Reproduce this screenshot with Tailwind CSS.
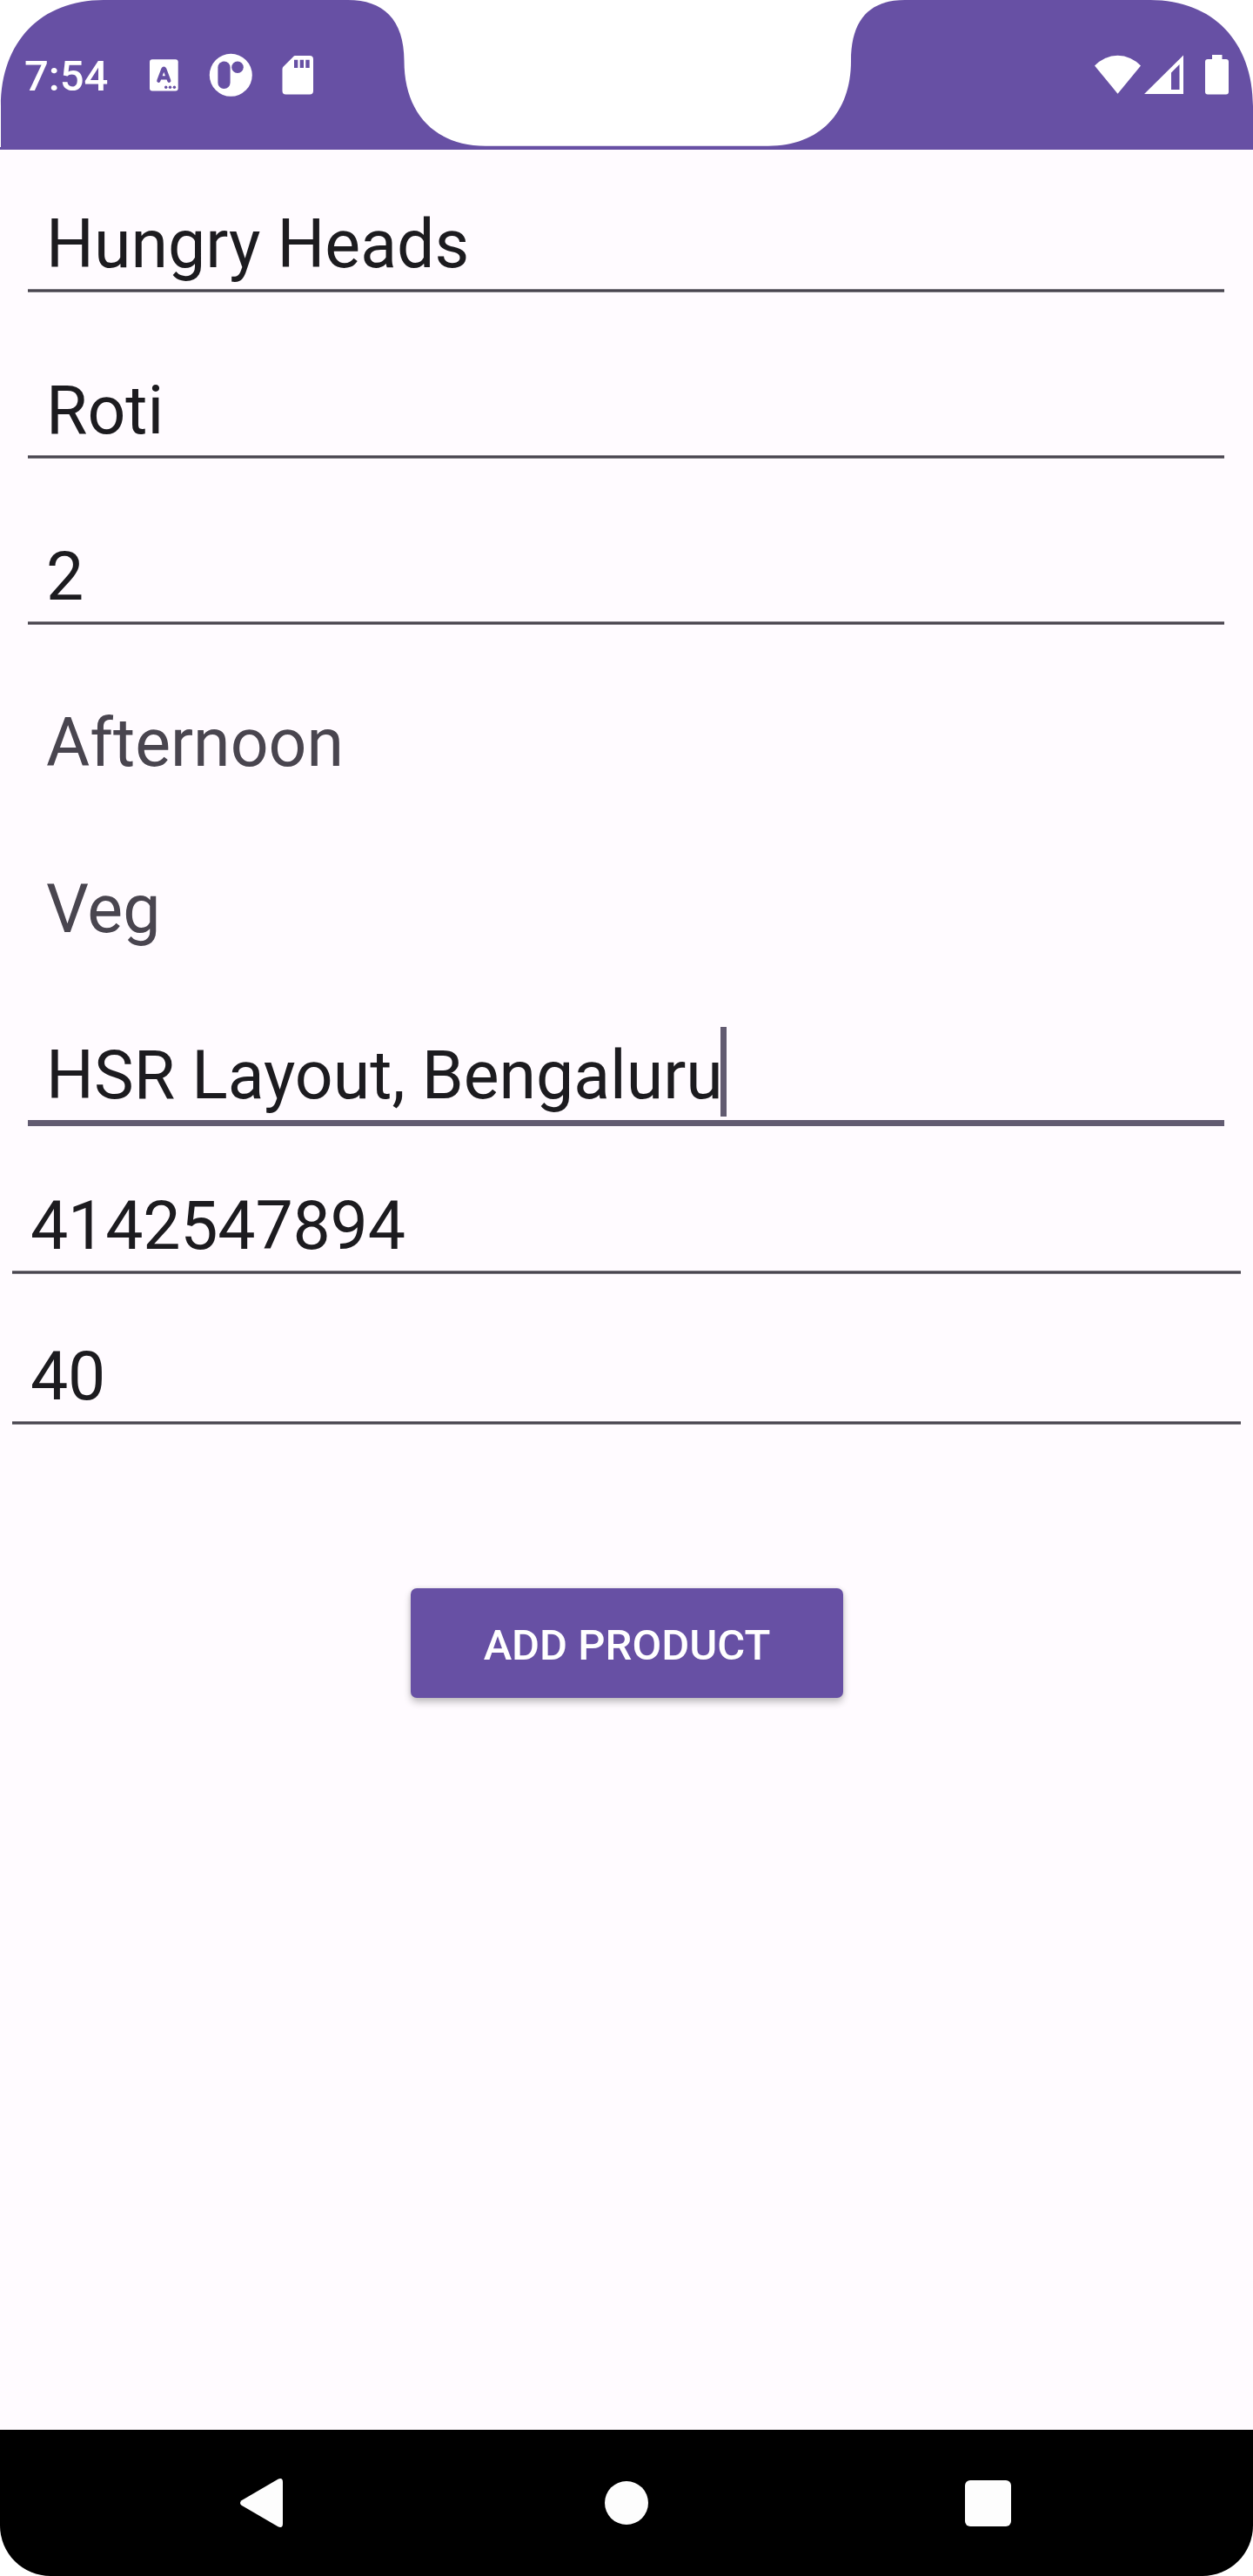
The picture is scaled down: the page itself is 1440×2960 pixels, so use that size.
<!DOCTYPE html>
<html lang="en">
<head>
<meta charset="utf-8">
<title>Add Product</title>
<script src="https://cdn.jsdelivr.net/npm/@tailwindcss/browser@4"></script>
</head>
<body class="bg-white">
<div class="flex h-[2960px] w-[1440px] flex-col overflow-hidden font-[Roboto,sans-serif]">

  <!-- Status bar with display cutout -->
  <header class="relative h-[172px] shrink-0">
    <svg class="absolute inset-0" width="1440" height="172" viewBox="0 0 1440 172">
      <path fill="#6750a4" d="M0 172V169H1V122C1 48 47 0 119 0H400C440 0 464.5 22 464.5 70C464.5 130 500 167.700 558 167.700H883C942 167.700 978 130 978 70C978 22 1000 0 1040 0H1322C1394 0 1440 48 1440 122V172Z"/>
    </svg>
    <div class="relative flex h-full items-start justify-between pt-[58px] pr-[28px] pl-[28px]">
      <div class="flex items-start">
        <span class="w-[144px] pt-px text-[49px] leading-[58px] font-medium text-white">7:54</span>
        <svg class="mt-[10px]" width="33" height="37" viewBox="172 68 33 37">
          <rect x="172" y="68.300" width="32.700" height="36.200" rx="3" fill="#fff"/>
          <path d="M182.300 92.800L187.300 79.500Q188.300 77.600 189.300 79.500L194.300 92.800M185 89.300H191.500" fill="none" stroke="#6750a4" stroke-width="4.200" stroke-linecap="round" stroke-linejoin="round"/>
          <g fill="#6750a4"><circle cx="190.700" cy="100.200" r="1.700"/><circle cx="195.500" cy="100.200" r="1.700"/><circle cx="200.400" cy="100.200" r="1.700"/></g>
        </svg>
        <svg class="mt-[3px] ml-[35px]" width="50" height="50" viewBox="240 61 50 50">
          <circle cx="265.300" cy="86.300" r="24.500" fill="#fff"/>
          <rect x="250.400" y="70.500" width="14.200" height="31.500" rx="7.100" fill="#6750a4"/>
          <circle cx="273" cy="77.300" r="6.800" fill="#6750a4"/>
        </svg>
        <svg class="mt-[5px] ml-[34px]" width="37" height="47" viewBox="324 63 37 47">
          <path fill="#fff" fill-rule="evenodd" d="M339 64H356Q360 64 360 68V104.500Q360 108.500 356 108.500H328.500Q324.500 108.500 324.500 104.500V79.500Q324.500 77.800 325.700 76.600L337 65.200Q338 64 339 64ZM338 68.700V78H342.300V68.700ZM344.700 68.700V78H349V68.700ZM351.300 68.700V78H355.700V68.700Z"/>
        </svg>
      </div>
      <div class="flex items-start pt-[4px]">
        <svg width="54" height="47" viewBox="1258 62 54 47"><path fill="#fff" d="M1258 75.500A36 36 0 0 1 1311 75.500L1284.500 107.700Z"/></svg>
        <svg class="ml-[2px]" width="47" height="47" viewBox="1314 62 47 47"><path fill="#fff" fill-rule="evenodd" d="M1315 108H1360V63.500ZM1346 83.500L1355.500 74V103H1346Z"/></svg>
        <svg class="ml-[24px]" width="27" height="47" viewBox="1385 62 27 47"><path fill="#fff" d="M1393 63H1404.500V68H1409Q1412 68 1412 71V105.500Q1412 108.500 1409 108.500H1388Q1385 108.500 1385 105.500V71Q1385 68 1388 68H1393Z"/></svg>
      </div>
    </div>
  </header>

  <!-- Product form -->
  <main class="flex grow flex-col bg-[#fffbff] pt-[9px] text-[77px] leading-[90px] text-[#1c1b1f]">
    <div class="flex flex-col gap-[18px] px-[32px]">
      <div class="flex h-[173px] flex-col pt-[55px]">
        <div class="h-[96px] pl-[21px]">Hungry Heads</div>
        <div class="h-1 w-[1375px] border-y border-[#7f7c83] bg-[#49454f]"></div>
      </div>
      <div class="flex h-[173px] flex-col pt-[55px]">
        <div class="h-[96px] pl-[21px]">Roti</div>
        <div class="h-1 w-[1375px] border-y border-[#7f7c83] bg-[#49454f]"></div>
      </div>
      <div class="flex h-[173px] flex-col pt-[55px]">
        <div class="h-[96px] pl-[21px]">2</div>
        <div class="h-1 w-[1375px] border-y border-[#7f7c83] bg-[#49454f]"></div>
      </div>
      <div class="h-[173px] pt-[55px] pl-[21px] text-[#49454f]">Afternoon</div>
      <div class="h-[173px] pt-[55px] pl-[21px] text-[#49454f]">Veg</div>
      <div class="flex h-[173px] flex-col pt-[44px]">
        <div class="flex h-[107px] pl-[21px]">
          <span class="w-[775px] pt-[11px] whitespace-nowrap">HSR Layout, Bengaluru</span>
          <span class="h-[103px] w-[7px] bg-[#625b71]"></span>
        </div>
        <div class="h-[7px] w-[1375px] bg-[#625b71]"></div>
      </div>
    </div>
    <div class="flex flex-col px-[14px] tracking-[-0.2px]">
      <div class="flex h-[173px] flex-col pt-[55px]">
        <div class="h-[96px] pl-[21px]">4142547894</div>
        <div class="h-1 border-y border-[#7f7c83] bg-[#49454f]"></div>
      </div>
      <div class="flex h-[173px] flex-col pt-[55px]">
        <div class="h-[96px] pl-[21px]">40</div>
        <div class="h-1 border-y border-[#7f7c83] bg-[#49454f]"></div>
      </div>
    </div>
    <button class="mt-[170px] ml-[472px] flex h-[126px] w-[497px] items-center justify-center rounded-[7px] bg-[#6750a4] pt-[5px] text-[49px] leading-[58px] font-medium text-white shadow-[0_5px_8px_rgba(0,0,0,0.24),0_0_5px_rgba(0,0,0,0.1)]">ADD PRODUCT</button>
  </main>

  <!-- Navigation bar -->
  <nav class="h-[168px] shrink-0 bg-white">
    <div class="flex h-full w-full items-center rounded-b-[58px] bg-black pl-[275px]">
      <svg width="51" height="58" viewBox="275 2847 51 58"><path fill="#fdfdfd" d="M277.500 2873.200L319.500 2848.700Q325 2846.500 325 2852V2900Q325 2905.500 319.500 2903.300L277.500 2878.800Q274.500 2876 277.500 2873.200Z"/></svg>
      <div class="ml-[369px] size-[50px] rounded-full bg-[#fdfdfd]"></div>
      <div class="ml-[364px] size-[53px] rounded-[6px] bg-[#fdfdfd]"></div>
    </div>
  </nav>
</div>
</body>
</html>
